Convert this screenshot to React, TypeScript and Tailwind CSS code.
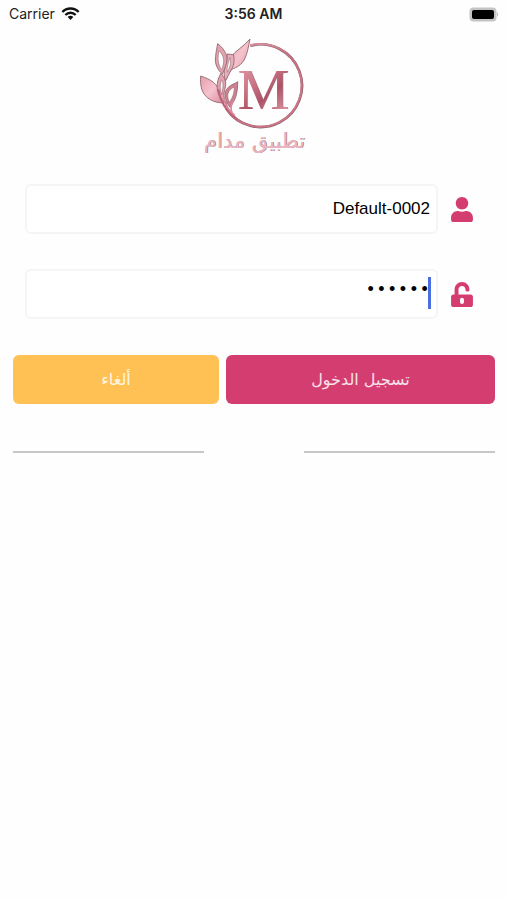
import { useState } from 'react';
import { FaUser, FaUnlockAlt } from 'react-icons/fa';

function StatusBar() {
  return (
    <div dir="ltr" className="grid grid-cols-3 items-center h-7 px-[9px] font-['Inter',sans-serif] text-[#222]">
      <div className="flex items-center gap-[6px] text-sm">
        <span>Carrier</span>
        <svg width="19" height="14" viewBox="0 0 57 42" fill="none" stroke="#111" strokeWidth="7">
          <path d="M4 15 C17 1 40 1 53 15" />
          <path d="M13 24 C22 15 35 15 44 24" />
          <path d="M20 30 C25 25 32 25 37 30 L28.5 39 Z" fill="#111" stroke="none" />
        </svg>
      </div>
      <div className="text-center text-sm font-semibold">3:56 AM</div>
      <div className="flex justify-end">
        <svg width="31" height="15" viewBox="0 0 31 15">
          <rect x="2.5" y="0.5" width="27" height="14" rx="4" fill="#c4c4c4" />
          <rect x="5" y="3" width="22" height="9" rx="2" fill="#000" />
          <path d="M30 5 C31.5 6 31.5 9 30 10 Z" fill="#bbb" />
        </svg>
      </div>
    </div>
  );
}

function Logo() {
  return (
    <svg width="125" height="130" viewBox="0 0 375 390" role="img" aria-label="تطبيق مدام">
      <defs>
        <linearGradient id="ring" x1="0" y1="0" x2="1" y2="1">
          <stop offset="0" stopColor="#e7a0ac" />
          <stop offset="0.5" stopColor="#c86f80" />
          <stop offset="1" stopColor="#d07a8d" />
        </linearGradient>
        <linearGradient id="leaf" x1="0" y1="0" x2="1" y2="1">
          <stop offset="0" stopColor="#e79fae" />
          <stop offset="0.5" stopColor="#f5c3cd" />
          <stop offset="1" stopColor="#d98a9c" />
        </linearGradient>
        <linearGradient id="letter" x1="0" y1="0" x2="0.6" y2="1">
          <stop offset="0" stopColor="#e8a5af" />
          <stop offset="0.45" stopColor="#cb7485" />
          <stop offset="0.7" stopColor="#ad5268" />
          <stop offset="1" stopColor="#d98f9c" />
        </linearGradient>
      </defs>
      <path d="M178 47 A124 124 0 1 1 106 236" fill="none" stroke="#87606a" strokeWidth="8" />
      <path d="M177 46 A124 124 0 1 1 105 235" fill="none" stroke="url(#ring)" strokeWidth="6" />
      <g stroke="#9b7177" strokeWidth="3" strokeLinejoin="round">
        <path d="M177 27 C172 50 170 68 161 87 C152 105 137 112 124 117 C116 124 111 133 107 145 L104 125 C105 108 111 95 119 82 C133 62 159 49 177 27 Z" fill="url(#leaf)" />
        <path d="M29 138 C59 148 82 162 87 190 C88 203 93 210 99 219 C69 219 43 206 33 180 C28 164 28 151 29 138 Z" fill="url(#leaf)" />
        <path d="M80 41 C101 57 115 81 105 107 L94 132 C79 119 70 100 74 79 C75 64 78 54 80 41 Z" fill="#e3a2af" />
        <path d="M84 62 C79 84 80 103 92 119 C102 95 100 77 84 62 Z" fill="#fefefe" strokeWidth="2" />
        <path d="M108 72 L127 74 C132 95 128 108 119 122 L104 152 C98 140 98 125 102 113 C107 99 111 86 108 72 Z" fill="#e8aeb9" />
        <path d="M117 82 C121 100 117 113 109 127 C106 111 113 96 117 82 Z" fill="#fefefe" strokeWidth="2" />
        <path d="M89 130 C101 142 108 157 102 176 C98 190 97 202 104 220 C85 204 76 185 79 161 C80 147 86 140 89 130 Z" fill="#e3a2af" />
        <path d="M91 149 C86 164 86 180 93 194 C93 178 102 164 91 149 Z" fill="#fbeef0" strokeWidth="2" />
        <path d="M140 155 C140 187 135 208 117 232 C100 209 97 186 112 172 C121 163 131 162 140 155 Z" fill="#d27f92" />
        <path d="M130 171 C109 180 106 198 115 217 C126 202 130 188 130 171 Z" fill="#fefefe" strokeWidth="2" />
      </g>
      <path d="M82 180 C88 215 103 240 131 261 M103 216 C108 238 119 254 137 267" fill="none" stroke="#bd5f77" strokeWidth="6" strokeLinecap="round" />
      <path d="M98 205 C103 225 114 243 130 255 M127 214 C119 225 118 238 124 250" fill="none" stroke="#d98a9c" strokeWidth="5" strokeLinecap="round" />
      <g fontFamily="'Liberation Serif', serif" fontSize="174" textAnchor="middle">
        <text x="219" y="237" fill="#a3737c">M</text>
        <text x="217" y="236" fill="url(#letter)">M</text>
      </g>
      <g fontFamily="'DejaVu Sans', sans-serif" fontSize="63" textAnchor="middle" direction="rtl">
        <text x="192" y="355" fill="#9b7c82">تطبيق مدام</text>
        <text x="190" y="353" fill="#eab5c0">تطبيق مدام</text>
      </g>
    </svg>
  );
}

const fieldClass =
  "block w-full h-[50px] rounded-md border-2 border-[#f5f5f5] bg-white px-[6px] text-right text-black outline-none";

export default function App() {
  const [user, setUser] = useState('Default-0002');
  const [password, setPassword] = useState('123456');

  return (
    <div className="min-h-screen bg-[#fefefe]">
      <StatusBar />
      <main dir="rtl" className="font-['DejaVu_Sans',sans-serif]">
        <div className="flex justify-center pt-[2px]">
          <Logo />
        </div>

        <form onSubmit={(e) => e.preventDefault()}>
          <div className="flex flex-col gap-[35px] pt-6 pr-[34px] pl-[25px]">
            <div className="flex items-center gap-[13px]">
              <label htmlFor="user" aria-label="اسم المستخدم" className="shrink-0 text-[#d43d70]">
                <FaUser className="w-[22px] h-[25px]" />
              </label>
              <input
                id="user"
                dir="ltr"
                type="text"
                value={user}
                onChange={(e) => setUser(e.target.value)}
                className={`${fieldClass} font-['Liberation_Sans',sans-serif] text-[17px]`}
              />
            </div>
            <div className="flex items-center gap-[13px]">
              <label htmlFor="password" aria-label="كلمة المرور" className="shrink-0 text-[#d43d70]">
                <FaUnlockAlt className="w-[22px] h-[25px]" />
              </label>
              <div className="relative grow">
                <input
                  id="password"
                  dir="ltr"
                  type="password"
                  value={password}
                  onChange={(e) => setPassword(e.target.value)}
                  className={`${fieldClass} pb-2 font-['Liberation_Mono',monospace] text-lg`}
                />
                <span className="absolute right-[7px] top-2 w-[3px] h-8 bg-[#4a6de0]" />
              </div>
            </div>
          </div>

          <div className="flex gap-[7px] pt-9 pr-3 pl-[13px] text-base text-white/85">
            <button type="submit" className="grow-[269] basis-0 h-[49px] rounded-md bg-[#d43d70]">
              تسجيل الدخول
            </button>
            <button type="button" className="grow-[206] basis-0 h-[49px] rounded-md bg-[#ffc153]">
              ألغاء
            </button>
          </div>
        </form>

        <div className="flex gap-[100px] pt-[47px] pr-3 pl-[13px]">
          <hr className="grow border-t-2 border-[#c8c8c8]" />
          <hr className="grow border-t-2 border-[#c8c8c8]" />
        </div>
      </main>
    </div>
  );
}
